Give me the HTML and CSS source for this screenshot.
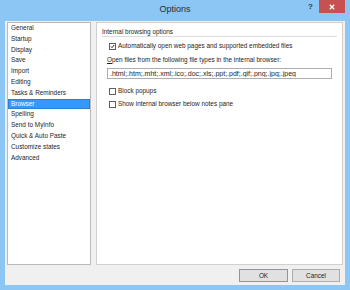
FILE: index.html
```html
<!DOCTYPE html>
<html lang="en">
<head>
    <meta charset="UTF-8">
    <title>Options</title>
    <link rel="stylesheet" href="styles.css">
</head>
<body>
    <div class="window">
        <div class="titlebar">
            <span></span>
            <span class="title">Options</span>
            <div class="controls">
                <span class="help">?</span>
                <span class="close">
                    <svg viewBox="0 0 6 6" width="6" height="6">
                        <path d="M0.8 0.8L5.2 5.2M5.2 0.8L0.8 5.2" stroke="#fff" stroke-width="1.3" fill="none" />
                    </svg>
                </span>
            </div>
        </div>

        <div class="client">
            <div class="main">
                <ul class="nav">
                    <li>General</li>
                    <li>Startup</li>
                    <li>Display</li>
                    <li>Save</li>
                    <li>Import</li>
                    <li>Editing</li>
                    <li>Tasks &amp; Reminders</li>
                    <li class="selected">Browser</li>
                    <li>Spelling</li>
                    <li>Send to MyInfo</li>
                    <li>Quick &amp; Auto Paste</li>
                    <li>Customize states</li>
                    <li>Advanced</li>
                </ul>

                <div class="panel">
                    <div class="group-title">Internal browsing options</div>
                    <div class="group-body">
                        <label class="check first">
                            <span class="box">
                                <svg viewBox="0 0 7 7" width="7" height="7">
                                    <path d="M1.3 3.5L2.8 5.1L5.8 1.3" stroke="#1a1a1a" stroke-width="1.3" fill="none" />
                                </svg>
                            </span>
                            Automatically open web pages and supported embedded files
                        </label>
                        <div class="field-label"><u>O</u>pen files from the following file types in the internal browser:</div>
                        <input class="text-input" type="text" value=".html;.htm;.mht;.xml;.ico;.doc;.xls;.ppt;.pdf;.gif;.png;.jpg;.jpeg">
                        <label class="check spaced">
                            <span class="box"></span>
                            Block popups
                        </label>
                        <label class="check">
                            <span class="box"></span>
                            Show internal browser below notes pane
                        </label>
                    </div>
                </div>
            </div>

            <div class="footer">
                <button class="btn default">OK</button>
                <button class="btn">Cancel</button>
            </div>
        </div>
    </div>
</body>
</html>
```

FILE: styles.css
```css
:root {
    --clr-frame: #8cc6f4;
    --clr-client: #f0f0f0;
    --clr-text: #1e1e1e;
    --clr-border: #c6c6c6;
    --clr-select: #3399ff;
    --clr-close: #c75050;
    --fs: 6.4px;
}

* {
    margin: 0;
    padding: 0;
    box-sizing: border-box;
}

body {
    font-family: 'Liberation Sans', Arial, sans-serif;
    font-size: var(--fs);
    color: var(--clr-text);
}

.window {
    width: 350px;
    height: 290px;
    background: var(--clr-frame);
    padding: 0 5px 5px;
    display: flex;
    flex-direction: column;
}

/* Title bar */
.titlebar {
    height: 21px;
    flex: none;
    display: grid;
    grid-template-columns: 1fr auto 1fr;
}

.title {
    font-size: 9px;
    line-height: 19px;
    color: #2d2d2d;
}

.controls {
    display: flex;
    justify-content: flex-end;
    align-items: flex-start;
}

.help {
    font-size: 8px;
    font-weight: bold;
    line-height: 13px;
    color: #333;
    margin-right: 6px;
}

.close {
    width: 26px;
    height: 13px;
    background: var(--clr-close);
    display: flex;
    align-items: center;
    justify-content: center;
}

/* Client area */
.client {
    flex: 1;
    background: var(--clr-client);
    padding: 1px 2px 0;
    display: flex;
    flex-direction: column;
}

.main {
    height: 243px;
    display: flex;
    gap: 5px;
}

.nav {
    width: 84px;
    list-style: none;
    background: #fff;
    border: 1px solid #b9b9b9;
}

.nav li {
    height: 10.8px;
    line-height: 10.8px;
    padding-left: 3px;
    white-space: nowrap;
}

.nav li.selected {
    background: var(--clr-select);
    color: #fff;
    box-shadow: inset 0 0 0 1px #2a7fd4;
}

.panel {
    flex: 1;
    background: #fff;
    border: 1px solid #d0d0d0;
    padding: 5px;
}

.group-title {
    line-height: 8px;
    border-bottom: 1px solid #dcdcdc;
}

.group-body {
    padding: 0 5px;
    display: flex;
    flex-direction: column;
}

.check {
    height: 10px;
    line-height: 10px;
    display: flex;
    align-items: center;
    gap: 2px;
    margin-top: 3px;
    white-space: nowrap;
}

.check.first {
    margin-top: 4px;
}

.check.spaced {
    margin-top: 7px;
}

.box {
    width: 7px;
    height: 7px;
    margin-left: 2px;
    border: 1px solid #606060;
    background: #fff;
    display: flex;
    align-items: center;
    justify-content: center;
    flex: none;
}

.box svg {
    display: block;
}

.field-label {
    margin-top: 4px;
    line-height: 10px;
    white-space: nowrap;
}

.text-input {
    margin-top: 3px;
    height: 11px;
    width: 100%;
    border: 1px solid #abadb3;
    background: #fff;
    padding: 0 2px;
    font-family: inherit;
    font-size: 7px;
    color: var(--clr-text);
    outline: none;
}

/* Buttons */
.footer {
    height: 20px;
    display: flex;
    justify-content: flex-end;
    align-items: flex-start;
    gap: 4px;
    padding: 4px 3px 0 0;
}

.btn {
    width: 48px;
    height: 13px;
    background: #e1e1e1;
    border: 1px solid #adadad;
    font-family: inherit;
    font-size: var(--fs);
    color: var(--clr-text);
}

.btn.default {
    width: 49px;
    border-color: #5fa0dd;
}
```
